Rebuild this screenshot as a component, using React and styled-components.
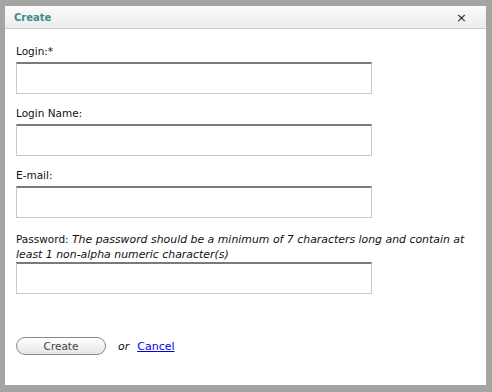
import React from 'react'
import styled, { createGlobalStyle } from 'styled-components'

const Global = createGlobalStyle`
  html, body {
    margin: 0;
    padding: 0;
    background: #a4a4a4;
  }
  body {
    font-family: "DejaVu Sans", Verdana, sans-serif;
  }
`

const Frame = styled.div`
  width: 492px;
  height: 392px;
  box-sizing: border-box;
  padding: 6px 6px 7px 5px;
`

const Dialog = styled.div`
  height: 100%;
  background: #fff;
  display: flex;
  flex-direction: column;
`

const Header = styled.div`
  height: 22px;
  border-bottom: 1px solid #cfcfcf;
  background: linear-gradient(#fbfbfb, #ececec);
  display: flex;
  align-items: center;
  justify-content: space-between;
  padding: 0 19px 0 9px;
`

const Title = styled.span`
  color: #3e8c86;
  font-weight: bold;
  font-size: 10px;
`

const Close = styled.span`
  font-size: 13px;
  color: #222;
  line-height: 1;
  cursor: pointer;
`

const Body = styled.form`
  padding: 15px 11px 0 11px;
  display: flex;
  flex-direction: column;
`

const Field = styled.div`
  display: flex;
  flex-direction: column;
  margin-bottom: 12px;
`

const Label = styled.label`
  font-size: 10.5px;
  color: #111;
  line-height: 14px;
  padding-top: ${p => (p.$multi ? '2px' : '0')};
  margin-bottom: ${p => (p.$multi ? '0' : '4px')};
`

const Hint = styled.em`
  font-style: italic;
  font-size: 10.9px;
`

const Input = styled.input`
  width: 356px;
  height: 32px;
  box-sizing: border-box;
  border: 1px solid #c8c8c8;
  border-top: 2px solid #7a7a7a;
  background: #fff;
  outline: none;
`

const Actions = styled.div`
  display: flex;
  align-items: center;
  margin-top: 31px;
  font-size: 11px;
`

const Button = styled.button`
  width: 90px;
  height: 18px;
  border: 1px solid #8a8a8a;
  border-radius: 9px;
  background: linear-gradient(#ffffff, #e6e6e6);
  color: #444;
  font-family: "DejaVu Sans", Verdana, sans-serif;
  font-size: 10.5px;
  padding: 0;
  box-shadow: inset 0 1px 0 #fff;
`

const Or = styled.span`
  font-style: italic;
  margin: 0 8px 0 12px;
  color: #111;
`

const Link = styled.a`
  color: #0000ee;
  text-decoration: underline;
`

export default function App() {
  return (
    <>
      <Global />
      <Frame>
        <Dialog>
          <Header>
            <Title>Create</Title>
            <Close>×</Close>
          </Header>
          <Body onSubmit={e => e.preventDefault()}>
            <Field>
              <Label>Login:*</Label>
              <Input />
            </Field>
            <Field>
              <Label>Login Name:</Label>
              <Input />
            </Field>
            <Field>
              <Label>E-mail:</Label>
              <Input />
            </Field>
            <Field>
              <Label $multi>
                Password: <Hint>The password should be a minimum of 7 characters long and contain at least 1 non-alpha numeric character(s)</Hint>
              </Label>
              <Input type="password" />
            </Field>
            <Actions>
              <Button>Create</Button>
              <Or>or</Or>
              <Link href="#">Cancel</Link>
            </Actions>
          </Body>
        </Dialog>
      </Frame>
    </>
  )
}
